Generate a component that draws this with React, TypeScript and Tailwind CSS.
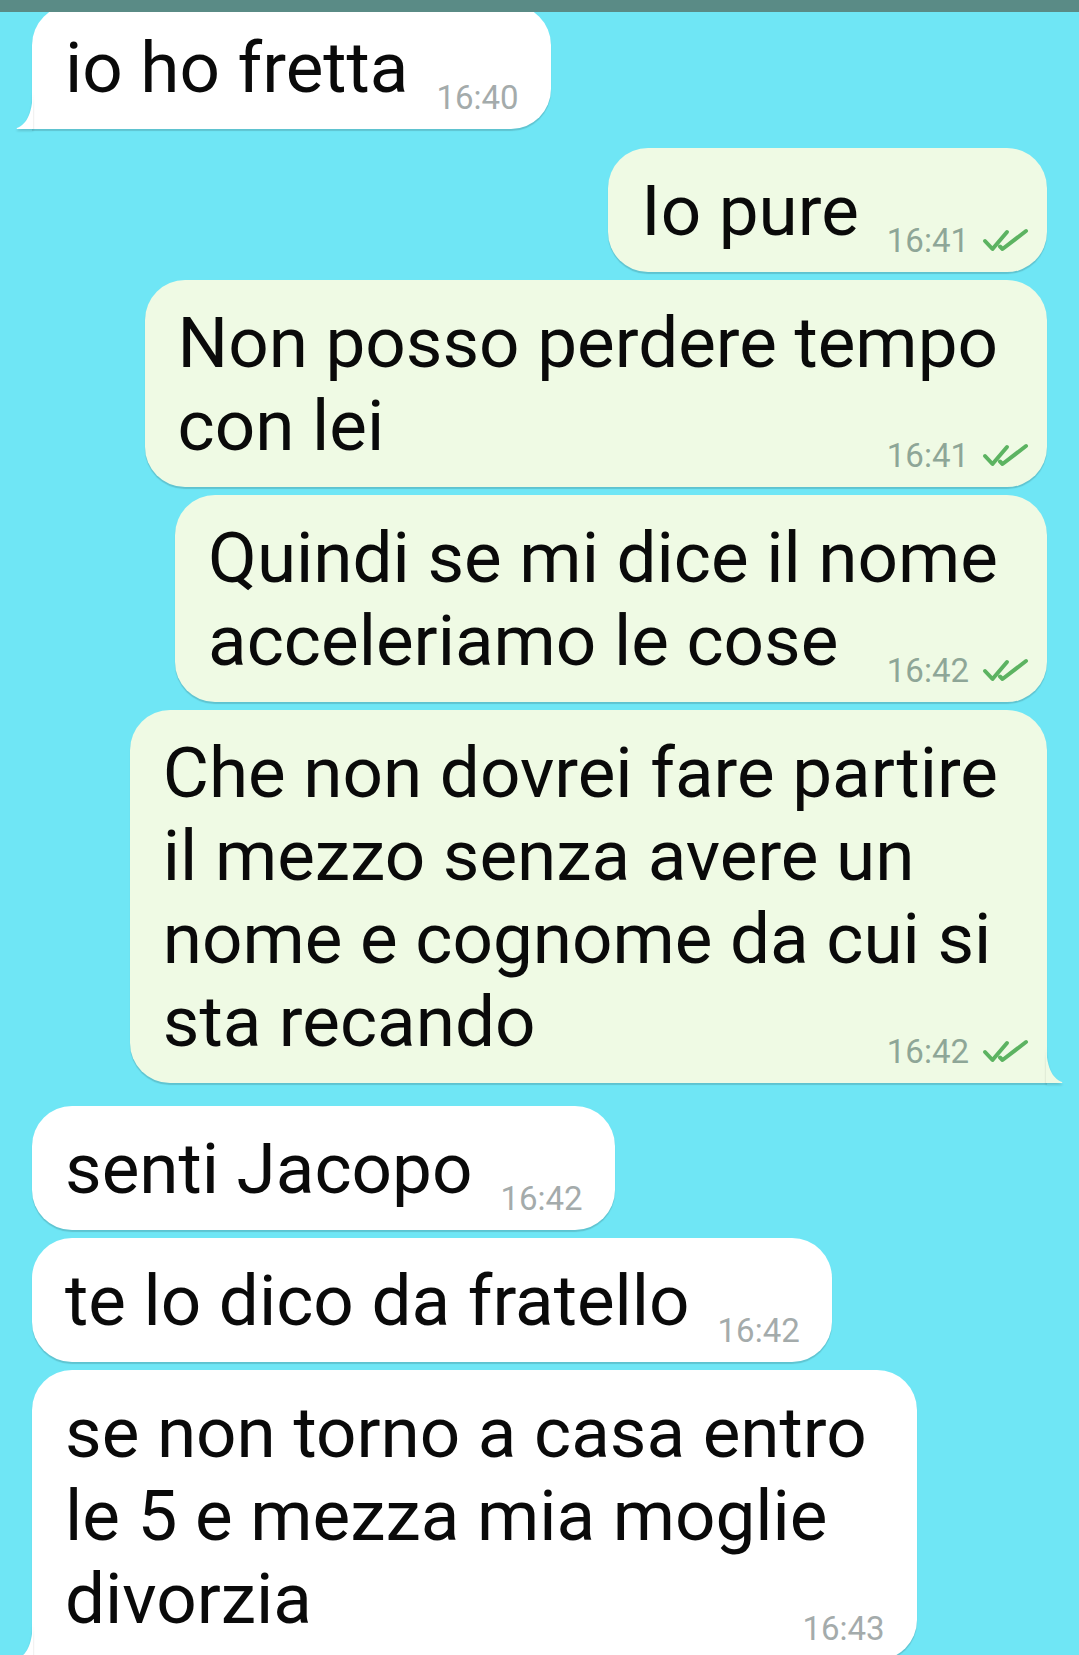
import React from 'react';

type Msg = {
  lines: string[];
  time: string;
  out?: boolean;
  tail?: boolean;
  gap: string;
};

const messages: Msg[] = [
  { lines: ['io ho fretta'], time: '16:40', tail: true, gap: 'mt-0' },
  { lines: ['Io pure'], time: '16:41', out: true, gap: 'mt-[19px]' },
  { lines: ['Non posso perdere tempo', 'con lei'], time: '16:41', out: true, gap: 'mt-[8px]' },
  { lines: ['Quindi se mi dice il nome', 'acceleriamo le cose'], time: '16:42', out: true, gap: 'mt-[8px]' },
  {
    lines: ['Che non dovrei fare partire', 'il mezzo senza avere un', 'nome e cognome da cui si', 'sta recando'],
    time: '16:42',
    out: true,
    tail: true,
    gap: 'mt-[8px]',
  },
  { lines: ['senti Jacopo'], time: '16:42', gap: 'mt-[23px]' },
  { lines: ['te lo dico da fratello'], time: '16:42', gap: 'mt-[8px]' },
  {
    lines: ['se non torno a casa entro', 'le 5 e mezza mia moglie', 'divorzia'],
    time: '16:43',
    tail: true,
    gap: 'mt-[8px]',
  },
];

function DoubleCheck() {
  return (
    <svg width="47" height="24" viewBox="0 0 47 24" fill="none" stroke="#5cb361" strokeWidth="4" strokeLinecap="round" strokeLinejoin="round">
      <path d="M3 13 L10.5 21 L25 4" />
      <path d="M18 18.5 L20.5 21 L44 3" />
    </svg>
  );
}

function Tail({ out }: { out?: boolean }) {
  if (out) {
    return (
      <svg
        className="absolute bottom-0 right-[-16px] drop-shadow-[0_2px_1px_rgba(0,0,0,0.15)]"
        width="17"
        height="42"
        viewBox="0 0 17 42"
      >
        <path d="M0 0 C0 26 6 37 16 41 C16.5 41.3 16.5 42 15.5 42 L0 42 Z" fill="#effae4" />
      </svg>
    );
  }
  return (
    <svg
      className="absolute bottom-0 left-[-16px] drop-shadow-[0_2px_1px_rgba(0,0,0,0.15)]"
      width="17"
      height="42"
      viewBox="0 0 17 42"
    >
      <path d="M17 0 C17 26 11 37 1 41 C0.5 41.3 0.5 42 1.5 42 L17 42 Z" fill="#ffffff" />
    </svg>
  );
}

function Bubble({ m }: { m: Msg }) {
  const head = m.lines.slice(0, -1);
  const last = m.lines[m.lines.length - 1];
  const shape = m.out
    ? 'self-end bg-[#effae4] pr-[18px]'
    : 'self-start bg-white pr-[32px]';
  const corner = m.tail ? (m.out ? 'rounded-br-none' : 'rounded-bl-none') : '';

  return (
    <div
      className={`relative w-fit rounded-[40px] pl-[33px] pt-[21px] pb-[20px] text-[71px] leading-[83px] text-[#0a0a0a] shadow-[0_2px_1px_rgba(0,0,0,0.15)] ${shape} ${corner} ${m.gap}`}
    >
      {head.map((l) => (
        <div key={l} className={`whitespace-nowrap ${m.out ? 'pr-[31px]' : 'pr-[18px]'}`}>
          {l}
        </div>
      ))}
      <div className="flex items-baseline whitespace-nowrap">
        <span>{last}</span>
        <span className="relative top-[17px] ml-auto flex items-baseline pl-[28px]">
          <span className={`text-[33px] leading-none ${m.out ? 'text-[#8ea697]' : 'text-[#a4abab]'}`}>{m.time}</span>
          {m.out && (
            <span className="ml-[13px]">
              <DoubleCheck />
            </span>
          )}
        </span>
      </div>
      {m.tail && <Tail out={m.out} />}
    </div>
  );
}

export default function App() {
  return (
    <div className="relative h-[1655px] w-[1079px] overflow-hidden bg-[#6fe6f5] font-['Roboto','Liberation_Sans',sans-serif]">
      <div className="absolute left-0 right-0 top-0 z-10 h-[12px] bg-[#5a8b86]" />
      <div className="flex flex-col px-[32px] pt-[5px]">
        {messages.map((m, i) => (
          <Bubble key={i} m={m} />
        ))}
      </div>
    </div>
  );
}
